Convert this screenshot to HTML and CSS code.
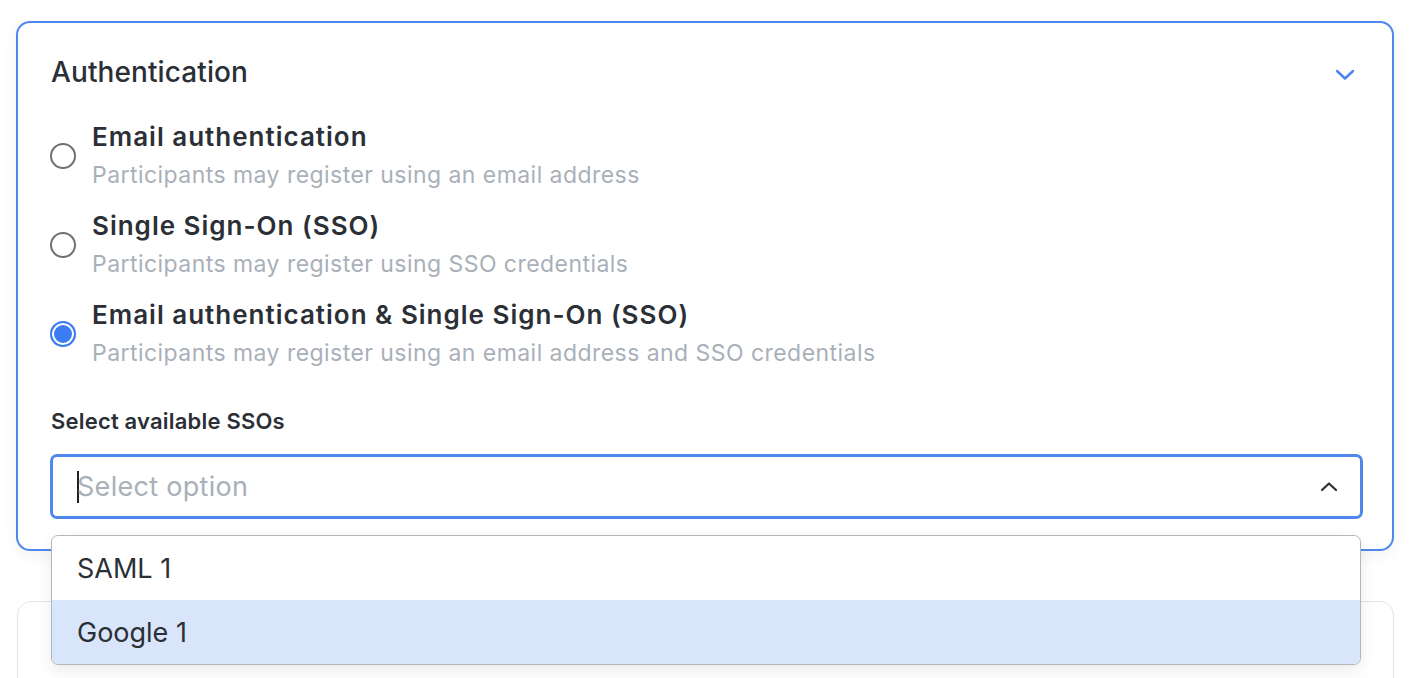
FILE: index.html
```html
<!DOCTYPE html>
<html>
<head>
<meta charset="utf-8">
<link rel="stylesheet" href="styles.css">
</head>
<body>
<div class="page">
  <section class="card active">
    <header class="card-head">
      <h2 class="card-title">Authentication</h2>
      <svg class="chev-down" width="20" height="12" viewBox="0 0 20 12"><path d="M2 2 L10 9.5 L18 2" fill="none" stroke="#4a84ea" stroke-width="2.4" stroke-linecap="round" stroke-linejoin="round"/></svg>
    </header>
    <div class="options">
      <label class="option">
        <span class="radio"></span>
        <span class="opt-text">
          <span class="opt-label">Email authentication</span>
          <span class="opt-desc">Participants may register using an email address</span>
        </span>
      </label>
      <label class="option">
        <span class="radio"></span>
        <span class="opt-text">
          <span class="opt-label">Single Sign-On (SSO)</span>
          <span class="opt-desc">Participants may register using SSO credentials</span>
        </span>
      </label>
      <label class="option">
        <span class="radio checked"></span>
        <span class="opt-text">
          <span class="opt-label">Email authentication &amp; Single Sign-On (SSO)</span>
          <span class="opt-desc">Participants may register using an email address and SSO credentials</span>
        </span>
      </label>
    </div>
    <div class="field">
      <div class="field-label">Select available SSOs</div>
      <div class="select-wrap">
        <div class="select">
          <span class="caret"></span>
          <span class="placeholder">Select option</span>
          <svg class="chev-up" width="18" height="11" viewBox="0 0 18 11"><path d="M2 9 L9 2.5 L16 9" fill="none" stroke="#2b2f36" stroke-width="2.2" stroke-linecap="round" stroke-linejoin="round"/></svg>
        </div>
        <ul class="menu">
          <li class="menu-item">SAML 1</li>
          <li class="menu-item hl">Google 1</li>
        </ul>
      </div>
    </div>
  </section>
  <section class="card next"></section>
</div>
</body>
</html>
```

FILE: styles.css
```css
* { box-sizing: border-box; }
html, body { margin: 0; padding: 0; background: #fff; }
body {
  font-family: Inter, "Noto Sans", "Liberation Sans", sans-serif;
  color: #2b2f36;
  overflow: hidden;
  height: 678px;
}
.page {
  padding: 21px 18px 0 16px;
  display: flex;
  flex-direction: column;
  height: 678px;
  overflow: hidden;
}
.card {
  border-radius: 14px;
  background: #fff;
}
.card.active {
  border: 2px solid #4f88ec;
  padding: 33px 31px 30px 33px;
  box-shadow: 0 4px 16px rgba(0,0,0,0.06);
  position: relative;
  z-index: 1;
  flex: none;
}
.card.next {
  margin-top: 50px;
  margin-left: 1px;
  height: 140px;
  flex: none;
  border: 1.5px solid #e3e4e6;
}
.card-head {
  display: flex;
  align-items: center;
  justify-content: space-between;
  height: 34px;
}
.card-title {
  margin: 0;
  margin-top: -2px;
  font-size: 28px;
  font-weight: 500;
  letter-spacing: 0.1px;
}
.chev-down { margin-right: 6px; margin-top: 4px; }
.options {
  margin-top: 32px;
  display: flex;
  flex-direction: column;
  gap: 21px;
}
.option {
  display: flex;
  align-items: center;
  gap: 16px;
}
.radio {
  width: 26px;
  height: 26px;
  border-radius: 50%;
  border: 2px solid #707070;
  flex: none;
  margin-top: -1px;
  margin-left: -1px;
}
.radio.checked {
  border-color: #3b7cf0;
  background: #3b7cf0;
  box-shadow: inset 0 0 0 2px #fff;
}
.opt-text { display: flex; flex-direction: column; gap: 8px; }
.opt-label {
  font-size: 26px;
  line-height: 30px;
  font-weight: 600;
  letter-spacing: 1px;
}
.opt-desc {
  font-size: 23px;
  line-height: 30px;
  color: #a9b0b9;
  letter-spacing: 0.45px;
}
.field { margin-top: 40px; }
.field-label {
  font-size: 22px;
  font-weight: 600;
  line-height: 26px;
  letter-spacing: 0.2px;
}
.select-wrap { position: relative; margin-top: 20px; }
.select {
  height: 65px;
  margin-left: -1px;
  margin-right: -2px;
  border: 3px solid #4f88ec;
  border-radius: 7px;
  display: flex;
  align-items: center;
  padding: 0 22px 0 24px;
}
.caret {
  width: 2px;
  height: 32px;
  background: #222;
  flex: none;
}
.placeholder {
  font-size: 27px;
  color: #a9b0b9;
  flex: 1;
  margin-left: -2px;
  letter-spacing: 0.3px;
}
.menu {
  position: absolute;
  left: 0;
  right: 0;
  top: 81px;
  margin: 0;
  padding: 0;
  list-style: none;
  border: 1.5px solid #b3b6bc;
  border-radius: 7px;
  background: #fff;
  overflow: hidden;
  box-shadow: 0 6px 16px rgba(0,0,0,0.08);
}
.menu-item {
  height: 64px;
  display: flex;
  align-items: center;
  padding-left: 25px;
  font-size: 27px;
  color: #2b2f36;
}
.menu-item.hl { background: #d9e5fa; }
```
